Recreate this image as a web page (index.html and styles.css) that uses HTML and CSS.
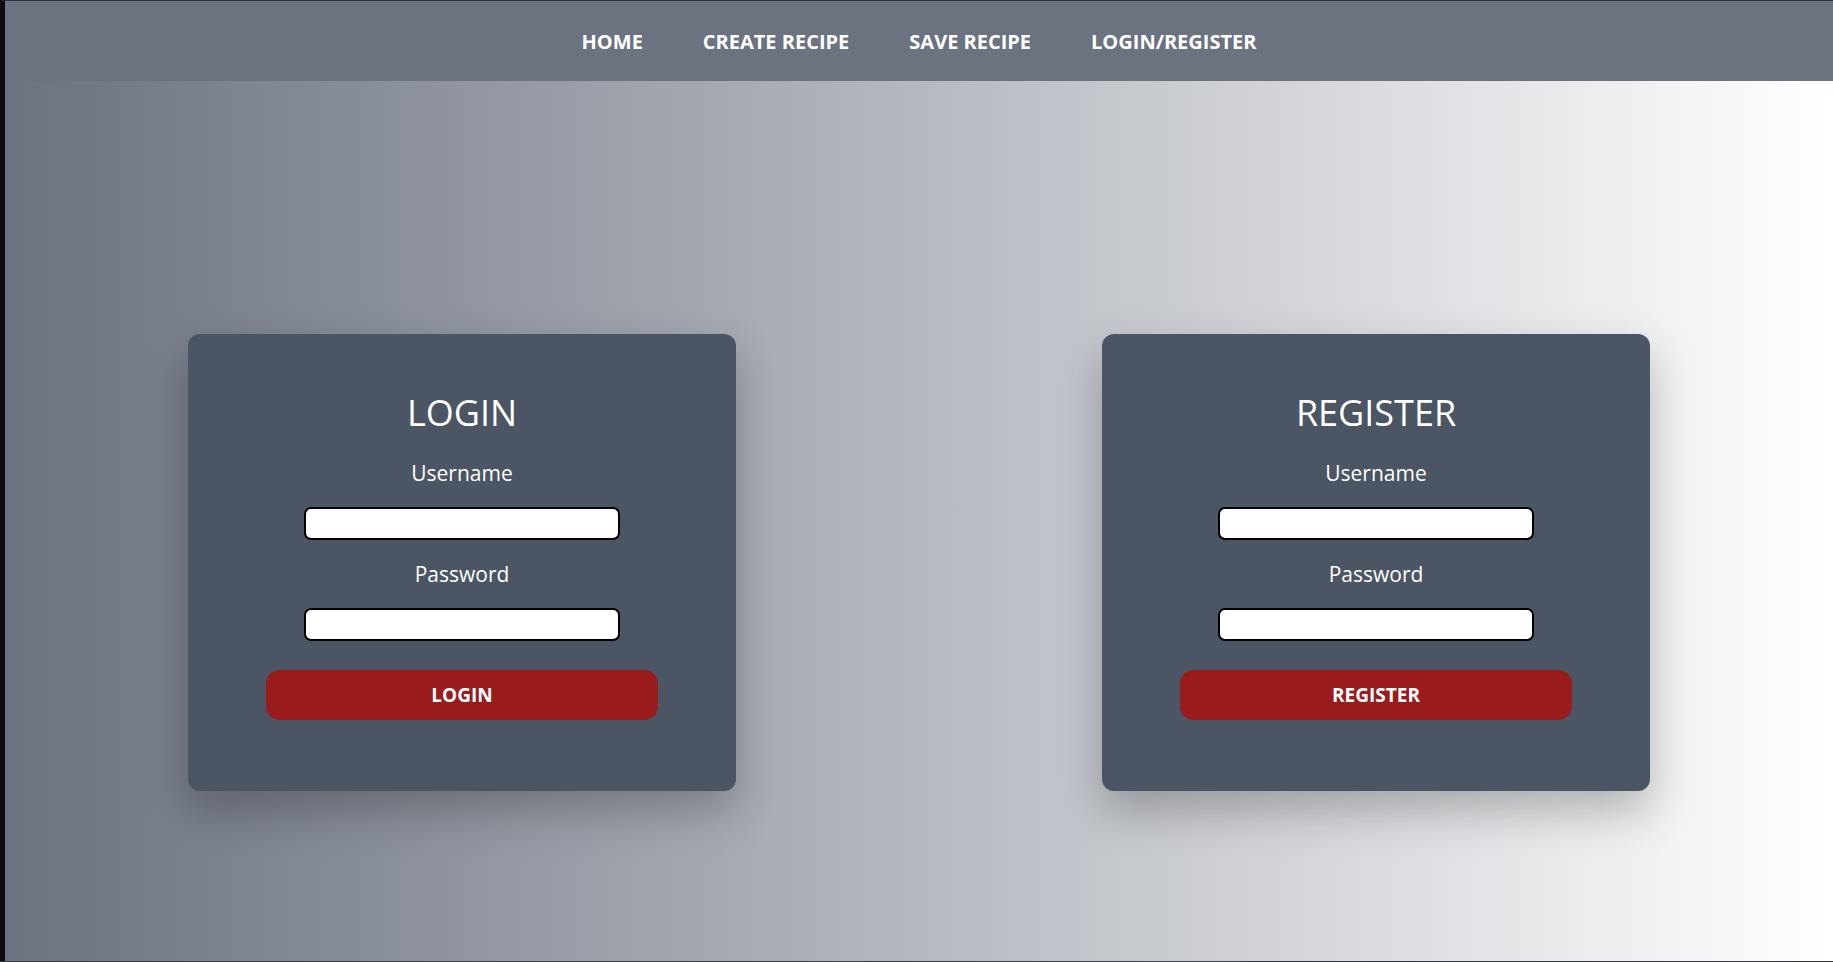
FILE: index.html
```html
<!DOCTYPE html>
<html lang="en">
<head>
<meta charset="utf-8">
<title>Recipes - Login / Register</title>
<link rel="stylesheet" href="styles.css">
</head>
<body>
<div class="frame">
  <nav class="navbar">
    <a class="nav-link" href="#">Home</a>
    <a class="nav-link" href="#">Create Recipe</a>
    <a class="nav-link" href="#">Save Recipe</a>
    <a class="nav-link" href="#">Login/Register</a>
  </nav>
  <main class="auth">
    <form class="card">
      <h2 class="card-title">LOGIN</h2>
      <label class="field-label" for="login-user">Username</label>
      <input class="field-input" id="login-user" type="text">
      <label class="field-label" for="login-pass">Password</label>
      <input class="field-input" id="login-pass" type="password">
      <button class="btn" type="button">Login</button>
    </form>
    <form class="card">
      <h2 class="card-title">REGISTER</h2>
      <label class="field-label" for="reg-user">Username</label>
      <input class="field-input" id="reg-user" type="text">
      <label class="field-label" for="reg-pass">Password</label>
      <input class="field-input" id="reg-pass" type="password">
      <button class="btn" type="button">Register</button>
    </form>
  </main>
</div>
<div class="bottom-edge"></div>
</body>
</html>
```
FILE: styles.css
```css
* { box-sizing: border-box; }
html, body { margin: 0; padding: 0; }
body {
  font-family: "Open Sans", "Noto Sans", sans-serif;
  background: #0c0c0c;
  overflow: hidden;
}
.frame {
  border-left: 5px solid #0c0c0c;
  border-top: 1px solid #2e3140;
  min-height: 100vh;
}
.navbar {
  height: 80px;
  background: #6b7280;
  display: flex;
  justify-content: center;
  align-items: center;
  gap: 60px;
}
.nav-link {
  color: #fff;
  text-decoration: none;
  text-transform: uppercase;
  font-weight: 700;
  font-size: 20px;
}
.auth {
  min-height: 100vh;
  background: linear-gradient(to right, #6b7280, #ffffff);
  display: flex;
  justify-content: space-around;
  align-items: center;
}
.card {
  width: 548px;
  background: #4b5563;
  border-radius: 12px;
  box-shadow: 0 20px 45px rgba(0, 0, 0, 0.25);
  padding: 59px 0 71px;
  display: flex;
  flex-direction: column;
  align-items: center;
  color: #fff;
}
.card-title {
  margin: 0 0 26px;
  font-size: 36px;
  line-height: 40px;
  font-weight: 400;
}
.field-label {
  font-size: 21px;
  line-height: 28px;
}
.field-input {
  margin: 20px 0 20px;
  width: 316px;
  height: 33px;
  border: 2px solid #000;
  border-radius: 7px;
  background: #fff;
}
.btn {
  margin-top: 9px;
  width: 392px;
  height: 50px;
  border: none;
  border-radius: 14px;
  background: #991b1b;
  color: #fff;
  font-family: inherit;
  font-size: 19px;
  font-weight: 700;
  text-transform: uppercase;
}
.bottom-edge {
  position: fixed;
  left: 0;
  right: 0;
  bottom: 0;
  height: 1px;
  background: #3a3d45;
}
```
